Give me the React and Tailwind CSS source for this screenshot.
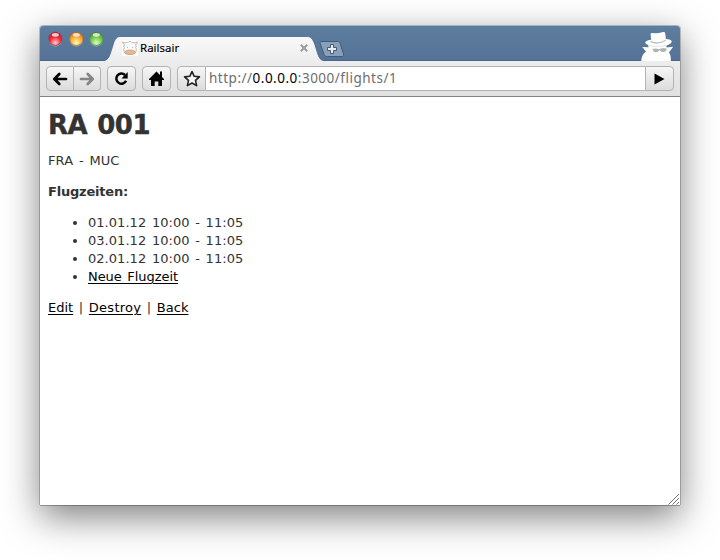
import React from "react";

const BTN =
  "flex h-[25px] items-center justify-center border border-[#b3b3b3] bg-linear-to-b from-[#f6f6f6] to-[#dcdcdc]";

function Light({ id, dark, mid, light }) {
  return (
    <svg width="15" height="16" viewBox="0 0 15 16" className="block">
      <defs>
        <radialGradient id={id} cx="50%" cy="80%" r="85%">
          <stop offset="0" stopColor={light} />
          <stop offset="0.5" stopColor={mid} />
          <stop offset="1" stopColor={dark} />
        </radialGradient>
      </defs>
      <circle cx="7.5" cy="8.8" r="7" fill="#a9bdd3" opacity="0.6" />
      <circle cx="7.5" cy="7.8" r="6.8" fill={`url(#${id})`} stroke={dark} strokeWidth="0.6" />
      <ellipse cx="7.5" cy="3.700" rx="3.600" ry="1.900" fill="#fff" opacity="0.75" />
    </svg>
  );
}

function Cow() {
  return (
    <svg width="16" height="16" viewBox="0 0 16 16" className="block">
      <rect width="16" height="16" fill="#fff" />
      <path
        d="M2.800 5 .8 3.500.8 1.800 3 3.200C4.500 1.500 6 3.200 6.500 2.200 7.500 1 8.700 1.200 9.500 2.300c1 .6 2.400-.6 3.500.9l2.200-1.400v1.700L13.200 5l1.300 1-.8 1.500c1 2 .8 3.800-.4 5-2.300 2.200-8.300 2.200-10.600 0-1.200-1.200-1.400-3-.4-5L1.500 6z"
        fill="#fafafa"
        stroke="#a9a9a9"
        strokeWidth="0.8"
      />
      <ellipse cx="8" cy="12.300" rx="5.400" ry="2.300" fill="#e8b78f" stroke="#b79272" strokeWidth="0.600" />
      <path d="M5.500 6.800v1M10.500 6.800v1" stroke="#aaa" strokeWidth="0.9" />
    </svg>
  );
}

function Spy() {
  return (
    <svg width="34" height="29" viewBox="0 0 34 29" className="block">
      <path
        d="M1.200 29c.3-4.600 1.800-7.400 4.800-9.600L2.200 15l6.400.2c-.4-.8-.4-1.500-.2-2.300C5.600 12.400 4.800 11 5.800 9.600c1-1.100 3-1.700 5.400-1.900L10.600 2.400C10.600 1.200 11.500.8 13 1c3.400.5 6-.1 9.200-.8 1.800-.4 2.800 0 3 1.200l.7 5.500c3.500.1 5.700 1.100 5.800 2.600.1 1.900-2.200 3.200-5.200 3.900v2l6.700-.6-4.300 5.800C30.600 22.500 31 25.500 30.800 29z"
        fill="#fff"
      />
      <path d="M10.500 9.400c4 2.500 11 2 15.300-1.400" fill="none" stroke="#c4c4c4" strokeWidth="1.300" />
      <path d="M8.500 13.400c5 1.500 13 1.300 18 0" fill="none" stroke="#dcdcdc" strokeWidth="0.8" />
      <path
        d="M12.600 17.100c2.200-.9 4.300-.7 6.200.2 1.900-1 5.200-1.500 8-.6-.4 2.600-2 3.500-4 3.200-1.600-.2-2.600-.9-3.400-2-.8 1.300-1.600 2.200-3.200 2.300-1.900.1-3.200-.8-3.600-3.100z"
        fill="#b0b3b3"
      />
    </svg>
  );
}

function TitleBar() {
  return (
    <div className="flex h-9 items-end rounded-t-[4px] border-t border-[#a2b4c5] bg-linear-to-b from-[#5d7e9f] to-[#547295] shadow-[inset_0_-1px_0_#49678b]">
      <div className="flex h-full w-[64px] gap-[6px] pt-[5px] pl-[8px]">
        <Light id="red" dark="#b0202b" mid="#f02c3c" light="#ffd0d0" />
        <Light id="amber" dark="#c4641c" mid="#fab23a" light="#fffbb0" />
        <Light id="green" dark="#43862f" mid="#78ca54" light="#ddffb4" />
      </div>
      <div className="relative h-6 w-[220px]">
        <svg width="220" height="25" viewBox="0 0 220 25" className="absolute -top-px left-0">
          <defs>
            <linearGradient id="tab" x1="0" y1="0" x2="0" y2="1">
              <stop offset="0" stopColor="#f9f9f9" />
              <stop offset="1" stopColor="#ededed" />
            </linearGradient>
          </defs>
          <path
            d="M0 25C3.500 24 5 21.500 6.500 17L9 9C10.500 4 12 1 16 .5H203C207 .5 209 3 211 9L213.500 17C215 21.500 216 24 220 25z"
            fill="url(#tab)"
          />
          <path
            d="M0 24.500C3.500 24 5 21.500 6.500 17L9 9C10.500 4 12 1 16 .5H203C207 .5 209 3 211 9L213.500 17C215 21.500 216 24 220 24.500"
            fill="none"
            stroke="#49678b"
            strokeWidth="0.8"
          />
        </svg>
        <div className="relative flex h-full items-center pb-[2px] pl-[18px]">
          <Cow />
          <span className="ml-[2px] flex-1 font-['Noto_Sans',sans-serif] text-[11.5px] leading-none text-black [-webkit-text-stroke:0.15px_black]">
            Railsair
          </span>
          <svg width="8" height="8" viewBox="0 0 8 8" className="mr-[16px]">
            <path d="M.8.8 7.200 7.200M7.200.8.8 7.200" stroke="#9c9c9c" strokeWidth="2" />
          </svg>
        </div>
      </div>
      <svg width="27" height="24" viewBox="0 0 27 24" className="-ml-[5px] block">
        <path
          d="M3 4.500H18.500C20 4.500 20.800 5 21.200 6.500L24.500 17C25 18.800 24.500 19.500 23 19.500H8.500C6.500 19.500 5.500 19 5 17.300L1.200 6.500C.8 5 1.300 4.500 3 4.500z"
          fill="#88a0ba"
          stroke="#3f5c7e"
        />
        <path d="M11.500 7.500h3v3h3v3h-3v3h-3v-3h-3v-3h3z" fill="#e7edf2" stroke="#465a70" />
      </svg>
      <div className="mr-[6px] ml-auto">
        <Spy />
      </div>
    </div>
  );
}

function Toolbar() {
  return (
    <div className="flex h-9 items-start border-b border-[#838383] bg-linear-to-b from-[#ededed] to-[#e0e0e0] pt-[5px] pr-[6px] pl-[6px]">
      <div className={`${BTN} w-[28px] rounded-l-[4px]`}>
        <svg width="16" height="14" viewBox="0 0 16 14">
          <path d="M14 7H3M7.300 2 2.300 7l5 5" fill="none" stroke="#000" strokeWidth="2.700" strokeLinecap="round" strokeLinejoin="round" />
        </svg>
      </div>
      <div className={`${BTN} w-[27px] rounded-r-[4px] border-l-0`}>
        <svg width="16" height="14" viewBox="0 0 16 14">
          <path d="M2 7H13M8.700 2l5 5-5 5" fill="none" stroke="#858585" strokeWidth="2.700" strokeLinecap="round" strokeLinejoin="round" />
        </svg>
      </div>
      <div className={`${BTN} ml-[6px] w-[29px] rounded-[4px]`}>
        <svg width="15" height="15" viewBox="0 0 15 15">
          <path d="M11 4A5.100 5.100 0 1 0 12.100 9.700" fill="none" stroke="#000" strokeWidth="2.500" />
          <path d="M13.700 1v6.500H7.500z" fill="#000" />
        </svg>
      </div>
      <div className={`${BTN} ml-[6px] w-[29px] rounded-[4px]`}>
        <svg width="15" height="15" viewBox="0 0 15 15">
          <path d="M7.500.5 11 4V.5h2v5.500l2 2V9h-2v6H9.300v-4.500H5.700V15H2V9H0V8z" fill="#000" />
        </svg>
      </div>
      <div className={`${BTN} ml-[6px] w-[29px] rounded-l-[4px]`}>
        <svg width="18" height="17" viewBox="0 0 18 17">
          <path
            d="M9 1.500l2.200 4.800 5.200.6-3.900 3.500 1.100 5.200L9 13l-4.600 2.600 1.100-5.200L1.600 6.900l5.200-.6z"
            fill="#f8f8f8"
            stroke="#222"
            strokeWidth="1.600"
            strokeLinejoin="round"
          />
        </svg>
      </div>
      <div className="flex h-[25px] flex-1 items-center border-y border-[#b3b3b3] bg-white pl-[3px] font-['Noto_Sans',sans-serif] text-[13.5px] leading-none tracking-[0.5px] whitespace-pre text-[#6d6d6d]">
        http://<span className="text-black">0.0.0.0</span>:3000/flights/1
      </div>
      <div className={`${BTN} w-[29px] rounded-r-[4px]`}>
        <svg width="11" height="12" viewBox="0 0 11 12">
          <path d="M.5.500 10.500 6 .5 11.500z" fill="#000" />
        </svg>
      </div>
    </div>
  );
}

function Link({ children }) {
  return (
    <a className="text-black underline decoration-1 underline-offset-2">{children}</a>
  );
}

export default function App() {
  const times = ["01.01.12 10:00 - 11:05", "03.01.12 10:00 - 11:05", "02.01.12 10:00 - 11:05"];
  return (
    <div className="h-[560px] w-[720px] overflow-hidden bg-white pt-[25px] pl-[40px]">
      <div className="flex h-[480px] w-[640px] flex-col rounded-t-[4px] bg-white shadow-[0_1px_0_0_rgba(0,0,0,0.28),1px_0_0_0_rgba(0,0,0,0.2),-1px_0_0_0_rgba(0,0,0,0.2),0_12px_36px_rgba(0,0,0,0.5)]">
        <TitleBar />
        <Toolbar />
        <div className="flex flex-1 flex-col px-2 font-[Verdana,'DejaVu_Sans',sans-serif] text-[13px] leading-[18px] [word-spacing:1.5px] text-[#333]">
          <h1 className="mt-[10px] text-[26px] leading-[36px] font-bold tracking-[-0.5px] [-webkit-text-stroke:0.4px_#333]">
            RA 001
          </h1>
          <p className="mt-[9px] tracking-[0.1px]">FRA - MUC</p>
          <p className="mt-[13px] font-bold tracking-[-0.2px]">Flugzeiten:</p>
          <ul className="mt-[13px] list-disc pl-10">
            {times.map((t) => (
              <li key={t} className="tracking-[0.04px]">{t}</li>
            ))}
            <li className="tracking-[-0.05px]">
              <Link>Neue Flugzeit</Link>
            </li>
          </ul>
          <p className="mt-[13px]">
            <Link>Edit</Link> | <span className="tracking-[0.25px]"><Link>Destroy</Link></span> | <Link>Back</Link>
          </p>
          <svg width="12" height="12" viewBox="0 0 12 12" className="mt-auto -mr-2 self-end">
            <path d="M.5 11.500 11 1M4.500 11.500 11 5M8.500 11.500 11 9" stroke="#777" strokeWidth="1" />
          </svg>
        </div>
      </div>
    </div>
  );
}
